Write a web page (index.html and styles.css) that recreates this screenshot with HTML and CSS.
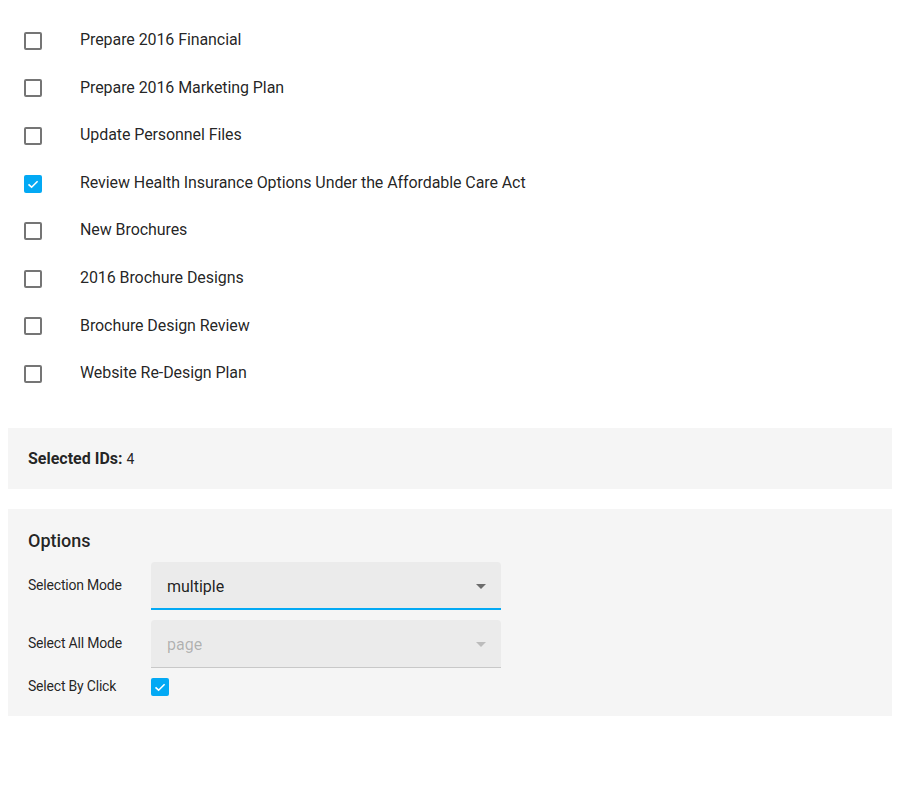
FILE: index.html
```html
<!DOCTYPE html>
<html>
<head>
<meta charset="utf-8">
<link rel="stylesheet" href="styles.css">
</head>
<body>
<ul class="list">
  <li class="item"><span class="cb"></span><span class="label">Prepare 2016 Financial</span></li>
  <li class="item"><span class="cb"></span><span class="label">Prepare 2016 Marketing Plan</span></li>
  <li class="item"><span class="cb"></span><span class="label">Update Personnel Files</span></li>
  <li class="item"><span class="cb checked"><svg viewBox="0 0 18 18" width="18" height="18"><path d="M4.5 9.3 L7.6 12.2 L13.6 6.2" fill="none" stroke="#fff" stroke-width="1.6"/></svg></span><span class="label">Review Health Insurance Options Under the Affordable Care Act</span></li>
  <li class="item"><span class="cb"></span><span class="label">New Brochures</span></li>
  <li class="item"><span class="cb"></span><span class="label">2016 Brochure Designs</span></li>
  <li class="item"><span class="cb"></span><span class="label">Brochure Design Review</span></li>
  <li class="item"><span class="cb"></span><span class="label">Website Re-Design Plan</span></li>
</ul>
<div class="selected">
  <span class="sel-title">Selected IDs:</span><span class="sel-val">4</span>
</div>
<div class="options">
  <div class="opt-caption">Options</div>
  <div class="opt-grid">
    <div class="opt-label">Selection Mode</div>
    <div class="select active"><span class="select-text">multiple</span><span class="arrow"></span></div>
    <div class="opt-label">Select All Mode</div>
    <div class="select disabled"><span class="select-text">page</span><span class="arrow"></span></div>
    <div class="opt-label">Select By Click</div>
    <div class="opt-cb"><span class="cb checked"><svg viewBox="0 0 18 18" width="18" height="18"><path d="M4.5 9.3 L7.6 12.2 L13.6 6.2" fill="none" stroke="#fff" stroke-width="1.6"/></svg></span></div>
  </div>
</div>
</body>
</html>
```
FILE: styles.css
```css
html, body {
  margin: 0;
  padding: 0;
  background: #fff;
}
body {
  margin: 8px;
  font-family: Roboto, "Liberation Sans", Arial, sans-serif;
  color: rgba(0, 0, 0, 0.87);
}
.list {
  list-style: none;
  margin: 0;
  padding: 8px 0 0 0;
}
.item {
  display: flex;
  align-items: center;
  padding: 13px 16px;
  font-size: 16px;
  line-height: 21.6px;
}
.cb {
  box-sizing: border-box;
  width: 18px;
  height: 18px;
  border: 2px solid rgba(0, 0, 0, 0.54);
  border-radius: 2px;
  flex: none;
  display: flex;
  align-items: center;
  justify-content: center;
}
.item .cb {
  margin-top: 2px;
}
.cb.checked {
  border: none;
  background: #03a9f4;
}
.cb svg {
  display: block;
}
.item .label {
  margin-left: 38px;
  letter-spacing: -0.08px;
}
.selected {
  margin-top: 31px;
  background: #f5f5f5;
  padding: 20px;
  display: flex;
  align-items: baseline;
  gap: 4px;
  height: 21px;
  font-size: 14px;
  line-height: 21px;
}
.sel-title {
  font-size: 16px;
  font-weight: 700;
}
.sel-val {
  line-height: 16px;
}
.options {
  margin-top: 20px;
  background: #f5f5f5;
  padding: 20px;
}
.opt-caption {
  font-size: 18px;
  font-weight: 500;
  line-height: 24px;
  margin-bottom: 9px;
}
.opt-grid {
  display: grid;
  grid-template-columns: 123px 350px;
  row-gap: 10px;
  align-items: center;
}
.opt-label {
  font-size: 14px;
  line-height: 18px;
  letter-spacing: -0.2px;
  margin-top: -1px;
}
.select {
  box-sizing: border-box;
  height: 48px;
  background: #ebebeb;
  border-radius: 4px 4px 0 0;
  display: flex;
  align-items: center;
  justify-content: space-between;
  padding: 0 15px 0 16px;
  font-size: 16px;
}
.select.active {
  border-bottom: 2px solid #03a9f4;
  padding-top: 4px;
}
.select.disabled {
  border-bottom: 1px solid #c8c8c8;
  padding-top: 3px;
}
.select.disabled .select-text {
  color: rgba(0, 0, 0, 0.26);
}
.arrow {
  width: 0;
  height: 0;
  border-left: 5px solid transparent;
  border-right: 5px solid transparent;
  border-top: 5px solid rgba(0, 0, 0, 0.54);
}
.select.disabled .arrow {
  border-top-color: rgba(0, 0, 0, 0.2);
}
.opt-cb {
  display: flex;
}
```
